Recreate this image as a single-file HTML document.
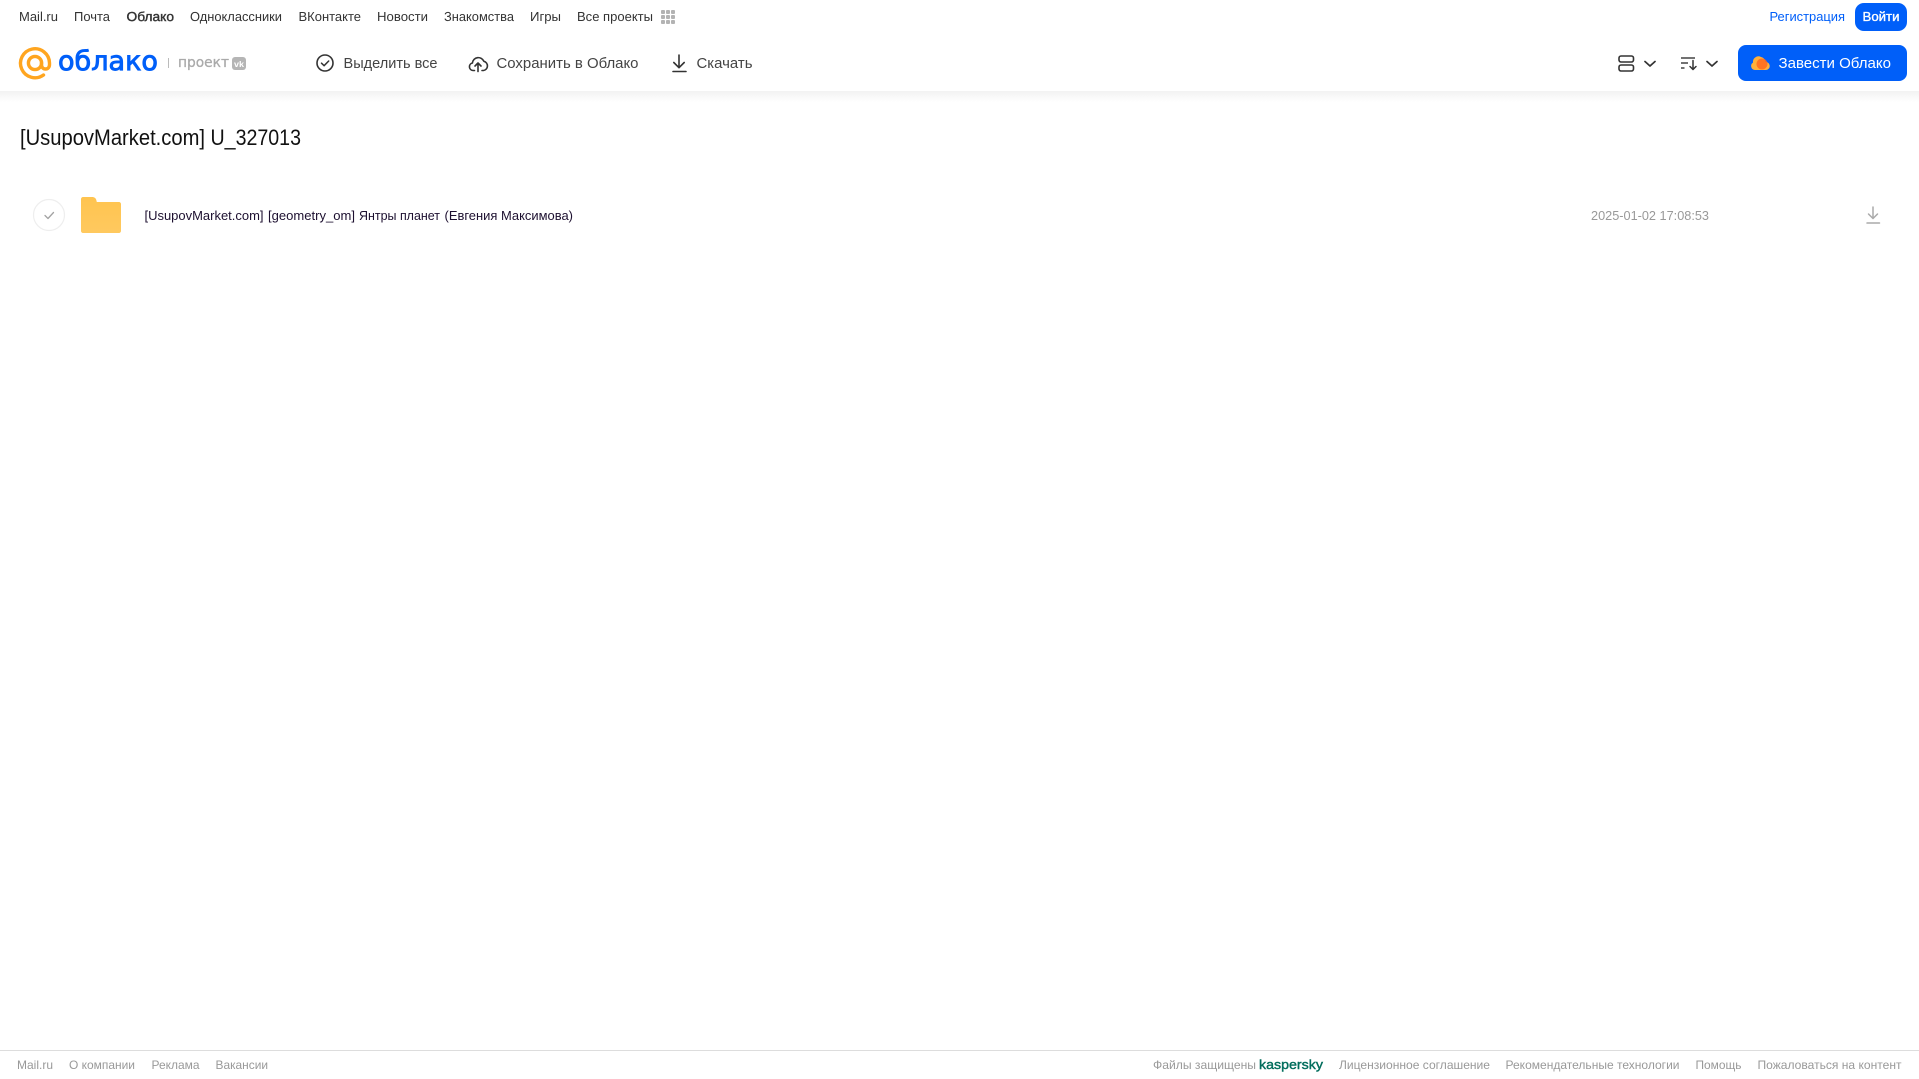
<!DOCTYPE html>
<html lang="ru">
<head>
<meta charset="utf-8">
<title>[UsupovMarket.com] U_327013</title>
<style>
html,body{margin:0;padding:0;background:#fff;width:1919px;height:1079px;overflow:hidden}
svg{display:block;font-family:"Liberation Sans",Arial,sans-serif}
.t{font-size:13px;fill:#333}
.h{font-size:15px;fill:#444}
.f{font-size:12px;fill:#999}
.r{font-size:13px;fill:#1d1030}
</style>
</head>
<body>
<svg width="1919" height="1079" viewBox="0 0 1919 1079" xmlns="http://www.w3.org/2000/svg">
<defs>
<linearGradient id="sh" x1="0" y1="0" x2="0" y2="1"><stop offset="0" stop-color="#f2f2f2"/><stop offset="1" stop-color="#fff"/></linearGradient>
<linearGradient id="fo" x1="0" y1="0" x2="0" y2="1"><stop offset="0" stop-color="#ffc44f"/><stop offset="1" stop-color="#ffc95f"/></linearGradient>
</defs>
<rect width="1919" height="1079" fill="#fff"/>
<rect x="0" y="91" width="1919" height="11" fill="url(#sh)"/>

<!-- top nav -->
<g text-rendering="geometricPrecision">
<text class="t" x="19" y="21" textLength="39" lengthAdjust="spacingAndGlyphs">Mail.ru</text>
<text class="t" x="74" y="21" textLength="36" lengthAdjust="spacingAndGlyphs">Почта</text>
<text class="t" x="126.500" y="21" textLength="47.500" lengthAdjust="spacingAndGlyphs" stroke="#333" stroke-width=".4">Облако</text>
<text class="t" x="190" y="21" textLength="92" lengthAdjust="spacingAndGlyphs">Одноклассники</text>
<text class="t" x="298.500" y="21" textLength="62.500" lengthAdjust="spacingAndGlyphs">ВКонтакте</text>
<text class="t" x="377" y="21" textLength="51" lengthAdjust="spacingAndGlyphs">Новости</text>
<text class="t" x="444" y="21" textLength="70" lengthAdjust="spacingAndGlyphs">Знакомства</text>
<text class="t" x="530" y="21" textLength="31" lengthAdjust="spacingAndGlyphs">Игры</text>
<text class="t" x="577" y="21" textLength="76" lengthAdjust="spacingAndGlyphs">Все проекты</text>
</g>
<g fill="#b3b3b3">
<rect x="661" y="10" width="4" height="4" rx="1"/><rect x="666" y="10" width="4" height="4" rx="1"/><rect x="671" y="10" width="4" height="4" rx="1"/>
<rect x="661" y="15" width="4" height="4" rx="1"/><rect x="666" y="15" width="4" height="4" rx="1"/><rect x="671" y="15" width="4" height="4" rx="1"/>
<rect x="661" y="20" width="4" height="4" rx="1"/><rect x="666" y="20" width="4" height="4" rx="1"/><rect x="671" y="20" width="4" height="4" rx="1"/>
</g>
<text x="1769.500" y="21" font-size="13" fill="#005ff9" textLength="75.500" lengthAdjust="spacingAndGlyphs">Регистрация</text>
<rect x="1855" y="3" width="52" height="28" rx="9" fill="#005ff9"/>
<text x="1862.500" y="21" font-size="13" fill="#fff" stroke="#fff" stroke-width=".35" textLength="37" lengthAdjust="spacingAndGlyphs">Войти</text>

<!-- logo -->
<circle cx="35" cy="63" r="6.600" fill="none" stroke="#ffa51f" stroke-width="3.400"/>
<path d="M43.500 75A14.500 14.500 0 1 1 49.500 63v1.500c0 2.800-1.700 4.500-4 4.500s-4-1.700-4-4.500V63" fill="none" stroke="#ffa51f" stroke-width="3.400" stroke-linecap="round"/>
<text x="58" y="70" font-family="'DejaVu Sans',sans-serif" font-size="27" fill="#005ff9" stroke="#005ff9" stroke-width=".9" textLength="100" lengthAdjust="spacingAndGlyphs">облако</text>
<rect x="168" y="58" width="1" height="10" fill="#bbb"/>
<text x="178" y="67" font-family="'DejaVu Sans',sans-serif" font-size="14" fill="#aaa" stroke="#aaa" stroke-width=".3" textLength="51" lengthAdjust="spacingAndGlyphs">проект</text>
<rect x="232" y="57" width="14" height="13" rx="3" fill="#b5b5b5"/>
<text x="234" y="67" font-size="8" font-weight="700" fill="#fff" textLength="10" lengthAdjust="spacingAndGlyphs">vk</text>

<!-- toolbar -->
<circle cx="325" cy="63" r="8" fill="none" stroke="#333" stroke-width="1.600"/>
<path d="M321.500 63.200l2.600 2.500 4.600-4.700" fill="none" stroke="#333" stroke-width="1.500" stroke-linecap="round" stroke-linejoin="round"/>
<text class="h" x="343.500" y="68" textLength="94" lengthAdjust="spacingAndGlyphs">Выделить все</text>

<path d="M474.500 70.500h-1.500a3.800 3.800 0 0 1-.6-7.500a6 6 0 0 1 11.500-1.700a4.700 4.700 0 0 1-.4 9.200h-1.500" fill="none" stroke="#333" stroke-width="1.600" stroke-linecap="round" stroke-linejoin="round"/>
<path d="M478 71.500v-8M475 66l3-3 3 3" fill="none" stroke="#333" stroke-width="1.600" stroke-linecap="round" stroke-linejoin="round"/>
<text class="h" x="496.500" y="68" textLength="142" lengthAdjust="spacingAndGlyphs">Сохранить в Облако</text>

<path d="M679 55v12.500M673.800 62.500l5.200 5.200 5.200-5.200M673 71.500h13" fill="none" stroke="#333" stroke-width="1.600" stroke-linecap="round" stroke-linejoin="round"/>
<text class="h" x="696.500" y="68" textLength="56" lengthAdjust="spacingAndGlyphs">Скачать</text>

<!-- view / sort -->
<rect x="1619" y="56" width="14.500" height="6" rx="2" fill="none" stroke="#333" stroke-width="1.600"/>
<rect x="1619" y="65" width="14.500" height="6" rx="2" fill="none" stroke="#333" stroke-width="1.600"/>
<path d="M1645 61.500l5 4.500 5-4.500" fill="none" stroke="#333" stroke-width="1.700" stroke-linecap="round" stroke-linejoin="round"/>
<path d="M1681 58h14M1681 63h7M1681 68h3.500" fill="none" stroke="#444" stroke-width="1.400"/>
<path d="M1693 60.500v9M1690 66.500l3 3 3-3" fill="none" stroke="#333" stroke-width="1.500" stroke-linecap="round" stroke-linejoin="round"/>
<path d="M1707 61.500l5 4.500 5-4.500" fill="none" stroke="#333" stroke-width="1.700" stroke-linecap="round" stroke-linejoin="round"/>

<!-- CTA -->
<rect x="1738" y="45" width="169" height="36" rx="8" fill="#005ff9"/>
<path d="M1755 70a4 4 0 0 1-2-7.400a5.500 5.500 0 0 1 8-5.600a6 6 0 0 1 4.500 5a4 4 0 0 1 .5 8z" fill="#ffb03a"/>
<circle cx="1762" cy="64" r="5.500" fill="#ff6a1f" opacity=".85"/>
<text x="1778.500" y="68" font-size="15" fill="#fff" textLength="112.500" lengthAdjust="spacingAndGlyphs">Завести Облако</text>

<!-- title -->
<text x="20" y="145" font-size="22" fill="#111" textLength="185" lengthAdjust="spacingAndGlyphs">[UsupovMarket.com]</text>
<text x="210.500" y="145" font-size="22" fill="#111" textLength="90.500" lengthAdjust="spacingAndGlyphs">U_327013</text>

<!-- row -->
<circle cx="49" cy="215" r="15.500" fill="#fff" stroke="#eeeeee" stroke-width="1.200"/>
<path d="M45 215.500l3 3 5.500-6" fill="none" stroke="#a3a3a3" stroke-width="1.300" stroke-linecap="round" stroke-linejoin="round"/>
<path d="M83 197h9c2.500 0 3.800 1.200 4.300 3l.5 2H119c1.100 0 2 .9 2 2v27c0 1.100-.9 2-2 2H83c-1.100 0-2-.9-2-2V199c0-1.100.9-2 2-2z" fill="url(#fo)"/>
<text class="r" x="144.500" y="220" textLength="119" lengthAdjust="spacingAndGlyphs">[UsupovMarket.com]</text>
<text class="r" x="268" y="220" textLength="87" lengthAdjust="spacingAndGlyphs">[geometry_om]</text>
<text class="r" x="359" y="220" textLength="81" lengthAdjust="spacingAndGlyphs">Янтры планет</text>
<text class="r" x="444.500" y="220" textLength="128.500" lengthAdjust="spacingAndGlyphs">(Евгения Максимова)</text>
<text x="1591" y="220" font-size="13" fill="#999" textLength="118" lengthAdjust="spacingAndGlyphs">2025-01-02 17:08:53</text>
<path d="M1873 207v11.500M1868.500 214l4.500 4.500 4.500-4.500M1867 223h12.500" fill="none" stroke="#aaa" stroke-width="1.500" stroke-linecap="round" stroke-linejoin="round"/>

<!-- footer -->
<rect x="0" y="1050" width="1919" height="1" fill="#ddd"/>
<text class="f" x="17" y="1069" textLength="36" lengthAdjust="spacingAndGlyphs">Mail.ru</text>
<text class="f" x="69" y="1069" textLength="66" lengthAdjust="spacingAndGlyphs">О компании</text>
<text class="f" x="151.500" y="1069" textLength="48" lengthAdjust="spacingAndGlyphs">Реклама</text>
<text class="f" x="215.500" y="1069" textLength="52.500" lengthAdjust="spacingAndGlyphs">Вакансии</text>
<text class="f" x="1153" y="1069" textLength="103" lengthAdjust="spacingAndGlyphs">Файлы защищены</text>
<text x="1259" y="1069" font-size="13" fill="#006d5c" stroke="#006d5c" stroke-width=".4" textLength="64" lengthAdjust="spacingAndGlyphs">kaspersky</text>
<text class="f" x="1339" y="1069" textLength="151" lengthAdjust="spacingAndGlyphs">Лицензионное соглашение</text>
<text class="f" x="1505.500" y="1069" textLength="174" lengthAdjust="spacingAndGlyphs">Рекомендательные технологии</text>
<text class="f" x="1695.500" y="1069" textLength="46" lengthAdjust="spacingAndGlyphs">Помощь</text>
<text class="f" x="1757.500" y="1069" textLength="144" lengthAdjust="spacingAndGlyphs">Пожаловаться на контент</text>
</svg>
</body>
</html>
